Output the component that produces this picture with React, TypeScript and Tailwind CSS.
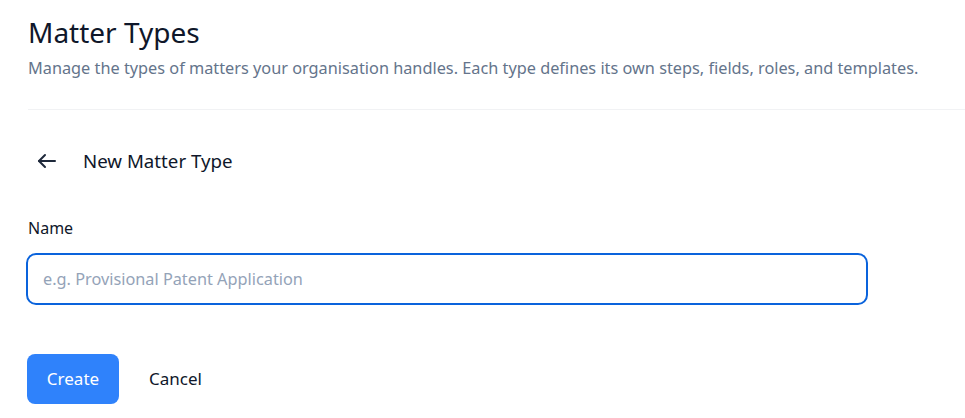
import React, { useState } from 'react';

const font = { fontFamily: '"Segoe UI", "Noto Sans", sans-serif' };

const BackArrow = () => (
    <svg width="20" height="16" viewBox="0 0 20 16" fill="none" stroke="currentColor" strokeWidth="2" strokeLinecap="round" strokeLinejoin="round">
        <path d="M18 8H2" />
        <path d="M8 2L2 8l6 6" />
    </svg>
);

export default function App() {
    const [name, setName] = useState('');

    return (
        <div className="min-h-screen bg-white text-[#1e293b]" style={font}>
            <div className="pl-[28px] pt-[14px]">
                <h1 className="text-[28px] leading-[36px] text-[#0f172a]">Matter Types</h1>
                <p className="mt-[6px] text-[16.3px] leading-[24px] text-[#64748b]">
                    Manage the types of matters your organisation handles. Each type defines its own steps, fields, roles, and templates.
                </p>
                <div className="mt-[29px] h-px bg-[#f1f2f4]" />

                <div className="flex items-center mt-[38px]">
                    <button className="w-[36px] h-[24px] flex items-center justify-start pl-[9px] text-[#1e293b]">
                        <BackArrow />
                    </button>
                    <h2 className="ml-[19px] text-[18.7px] leading-[26px] text-[#0f172a]">New Matter Type</h2>
                </div>

                <label className="block mt-[42px] text-[16px] leading-[24px] text-[#0f172a]">Name</label>
                <div className="mt-[13px] w-[842px] -ml-[2px]">
                    <input
                        autoFocus
                        value={name}
                        onChange={e => setName(e.target.value)}
                        placeholder="e.g. Provisional Patent Application"
                        className="w-full h-[52px] rounded-[10px] border-2 border-[#0a63dc] px-[15px] text-[16.3px] text-[#0f172a] placeholder:text-[#94a3b8] outline-none caret-[#0f172a]"
                        style={font}
                    />
                </div>

                <div className="flex items-center mt-[49px] -ml-[1px]">
                    <button className="h-[50px] w-[92px] rounded-[8px] bg-[#2f82fb] text-white text-[17px]">Create</button>
                    <button className="ml-[30px] text-[17px] text-[#0f172a]">Cancel</button>
                </div>
            </div>
        </div>
    );
}
